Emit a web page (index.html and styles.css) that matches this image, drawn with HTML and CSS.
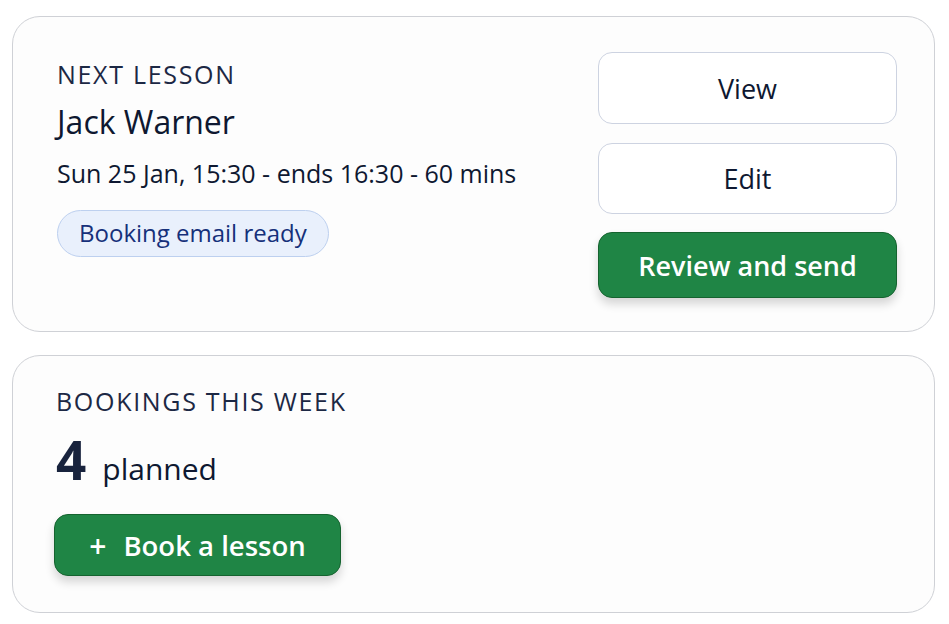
FILE: index.html
```html
<!DOCTYPE html>
<html lang="en">
<head>
<meta charset="utf-8">
<title>Lessons</title>
<link rel="stylesheet" href="styles.css">
</head>
<body>
<main class="page">
  <section class="card lesson">
    <div class="lesson-info">
      <div class="label">NEXT LESSON</div>
      <div class="name">Jack Warner</div>
      <div class="when">Sun 25 Jan, 15:30 - ends 16:30 - 60 mins</div>
      <span class="pill">Booking email ready</span>
    </div>
    <div class="actions">
      <button class="btn btn-outline btn-view">View</button>
      <button class="btn btn-outline btn-edit">Edit</button>
      <button class="btn btn-green btn-review">Review and send</button>
    </div>
  </section>
  <section class="card bookings">
    <div class="label">BOOKINGS THIS WEEK</div>
    <div class="count"><span class="num">4</span><span class="unit">planned</span></div>
    <button class="btn btn-green btn-book"><span class="plus">+</span>Book a lesson</button>
  </section>
</main>
</body>
</html>
```
FILE: styles.css
```css
* { box-sizing: border-box; }
html, body { margin: 0; background: #ffffff; }
body {
  font-family: "Open Sans", "Noto Sans", sans-serif;
  color: #0f1a33;
}
.page {
  width: 949px;
  padding: 16px 14px 0 12px;
  display: flex;
  flex-direction: column;
  gap: 23px;
}
.card {
  background: #fdfdfd;
  border: 1.5px solid #cfd1d6;
  border-radius: 28px;
}
.lesson {
  height: 316px;
  display: flex;
  justify-content: space-between;
  align-items: flex-start;
  padding: 35px 37px 0 44px;
}
.label {
  font-size: 25px;
  letter-spacing: 1.7px;
  color: #1c2844;
  line-height: 32px;
}
.lesson .label { margin-top: 6px; }
.name {
  font-size: 32px;
  line-height: 40px;
  margin-top: 12px;
  color: #0e1831;
}
.when {
  font-size: 25px;
  line-height: 32px;
  margin-top: 15px;
  color: #0e1831;
}
.pill {
  display: inline-block;
  margin-top: 21px;
  height: 47px;
  line-height: 44px;
  padding: 0 21px;
  border-radius: 24px;
  background: #e9f0fc;
  border: 1.5px solid #bdd0ef;
  color: #16307a;
  font-size: 24px;
}
.actions {
  width: 299px;
  display: flex;
  flex-direction: column;
}
.btn {
  font-family: inherit;
  border-radius: 14px;
  cursor: pointer;
  display: flex;
  align-items: center;
  justify-content: center;
  padding: 0;
}
.btn-outline {
  background: #ffffff;
  border: 1.5px solid #cdd3e1;
  font-size: 27px;
  color: #0e1831;
}
.btn-view { height: 72px; }
.btn-edit { height: 71px; margin-top: 19px; }
.btn-green {
  background: #1f8545;
  border: 1.5px solid #15632f;
  color: #ffffff;
  font-weight: 600;
  box-shadow: 0 6px 10px rgba(0, 0, 0, 0.16);
}
.btn-review {
  height: 66px;
  margin-top: 18px;
  font-size: 27px;
}
.bookings {
  height: 258px;
  padding: 29px 40px 0 43px;
}
.count {
  display: flex;
  align-items: baseline;
  margin-top: 13px;
  line-height: 60px;
  height: 60px;
}
.num {
  font-size: 53px;
  font-weight: 700;
  color: #18233d;
  margin-right: 16px;
}
.unit {
  font-size: 30px;
  line-height: 40px;
  color: #0e1831;
}
.btn-book {
  margin-top: 24px;
  width: 287px;
  height: 62px;
  font-size: 27.5px;
  margin-left: -2px;
}
.plus {
  font-size: 30px;
  margin-right: 17px;
  font-weight: 600;
}
```
